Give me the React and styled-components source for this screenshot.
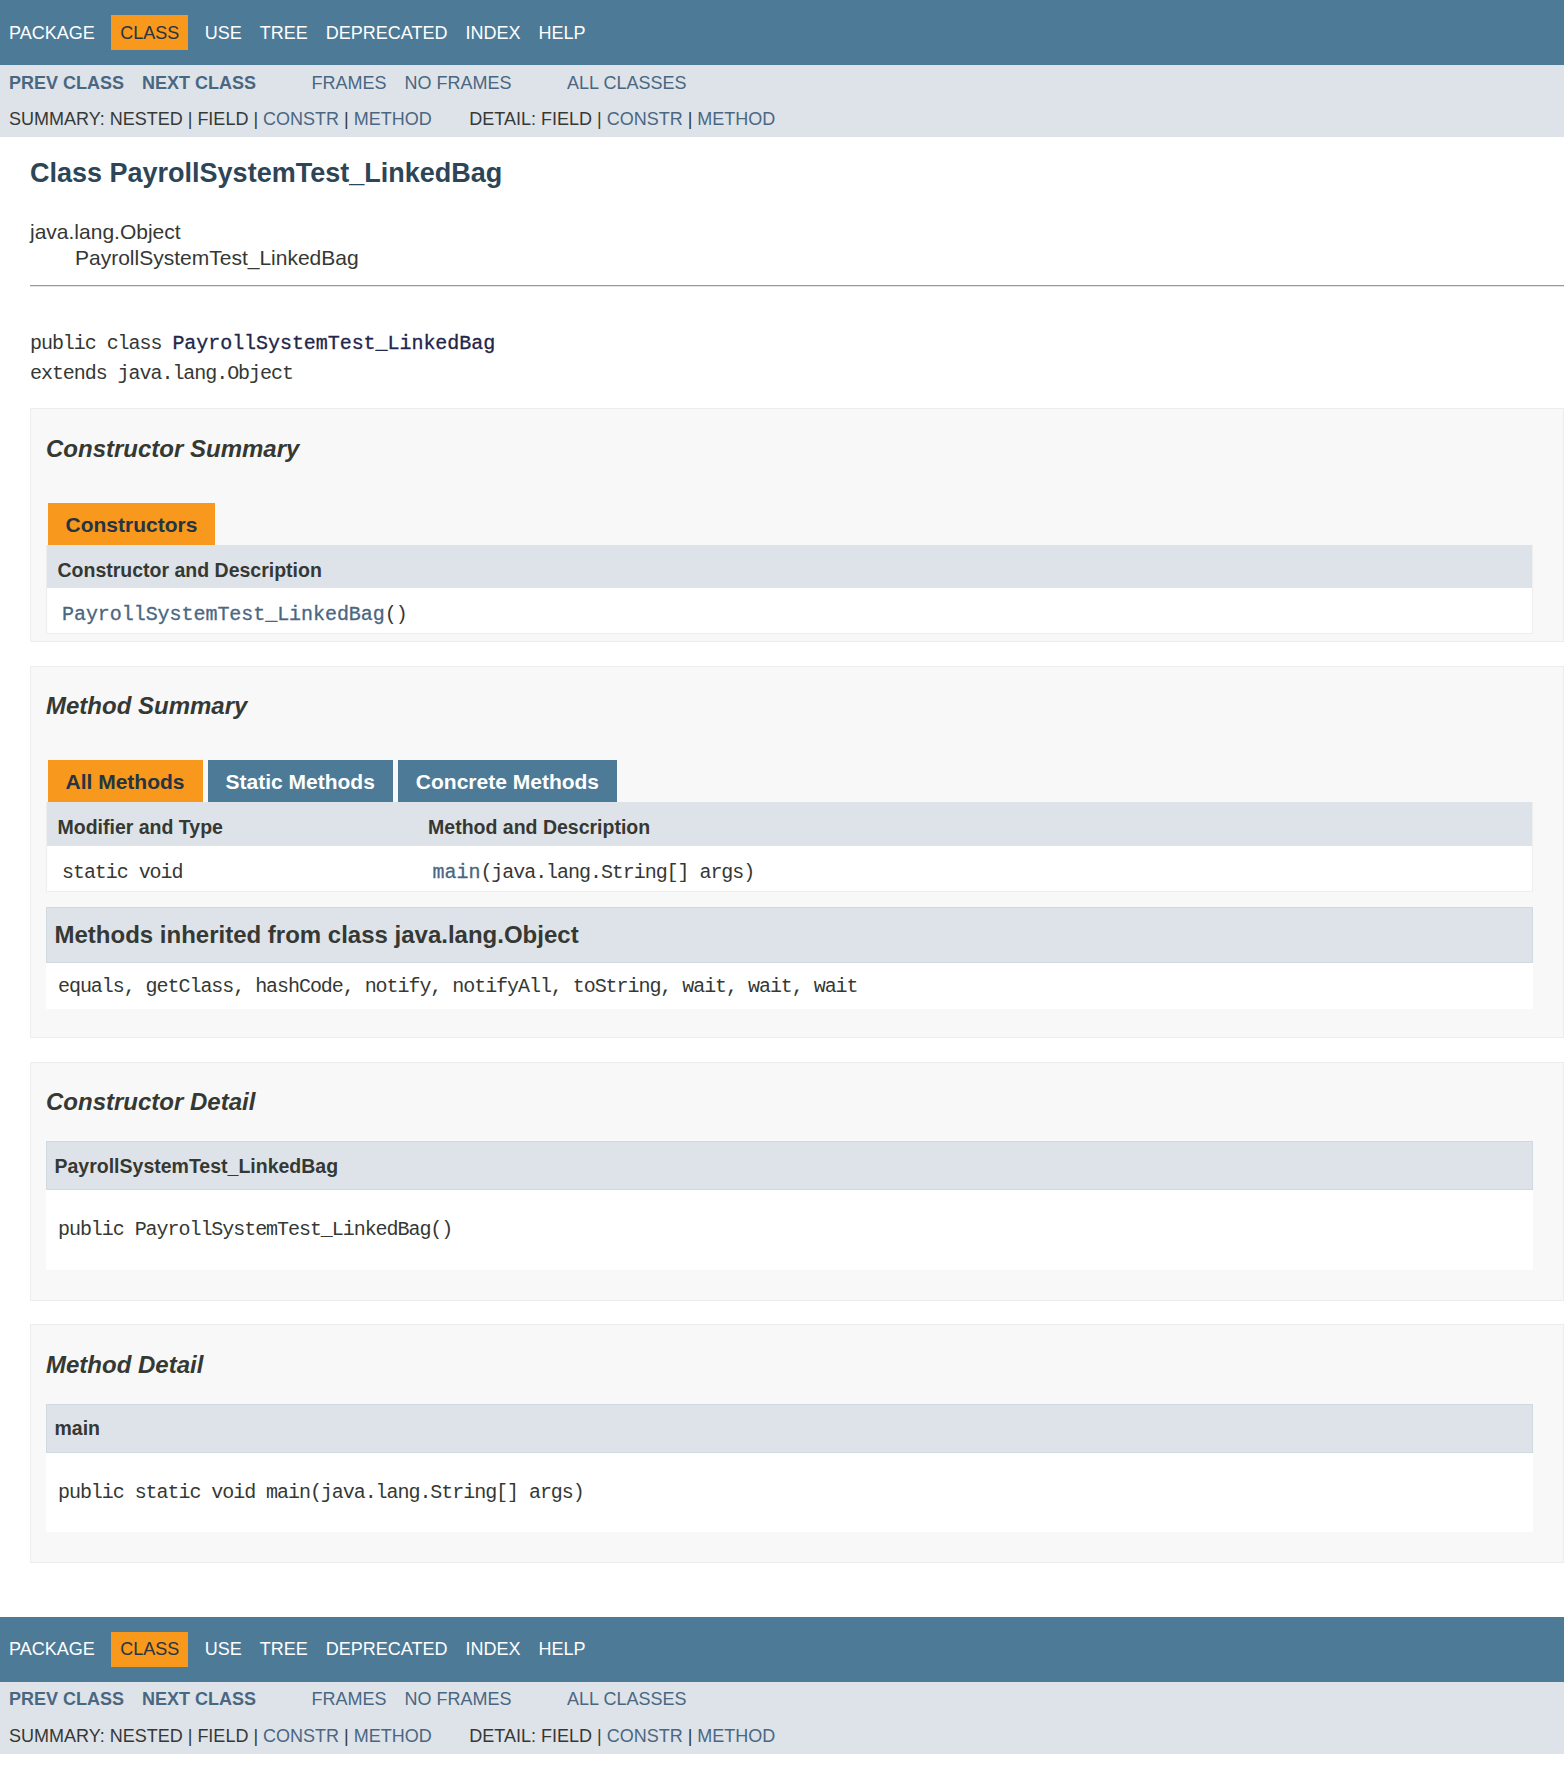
import React from "react";
import styled, { createGlobalStyle } from "styled-components";

const GlobalStyle = createGlobalStyle`
  body {
    margin: 0;
    background: #ffffff;
    color: #353833;
    font-family: "Liberation Sans", Arial, Helvetica, sans-serif;
    font-size: 21px;
  }
`;

const MONO = `"Liberation Mono", "DejaVu Sans Mono", monospace`;

/* ---------- navigation ---------- */

const TopNav = styled.div`
  background-color: #4d7a97;
  height: 50px;
  padding-top: 15px;
  font-size: 18px;
  margin-top: ${(p) => (p.$bottom ? "16px" : "0")};
`;

const NavList = styled.ul`
  display: flex;
  margin: 0;
  padding: 0;
  list-style: none;
`;

const NavItem = styled.li`
  padding: 7.5px 9px;
  line-height: 20px;
  color: ${(p) => (p.$active ? "#253441" : "#ffffff")};
  background-color: ${(p) => (p.$active ? "#f8981d" : "transparent")};
  margin: ${(p) => (p.$active ? "0 7.5px" : "0")};
`;

const SubNav = styled.div`
  background-color: #dee3e9;
  font-size: 18px;
`;

const SubRow = styled.div`
  display: flex;
`;

const SubList = styled.ul`
  display: flex;
  margin: 0 37.5px 0 0;
  padding: 0;
  list-style: none;
`;

const SubItem = styled.li`
  padding: 7.5px 9px;
  line-height: 21px;
  color: #4a6782;
  font-weight: ${(p) => (p.$bold ? "bold" : "normal")};
`;

const JumpRow = styled.div`
  display: flex;
  padding: 8px 0 7px 9px;
  line-height: 21px;
  white-space: pre;
`;

const JumpList = styled.div`
  margin-right: 37.5px;
`;

const Link = styled.span`
  color: #4a6782;
`;

/* bold member names: slightly heavier and wider than the plain code text */
const MemberName = styled.span`
  color: ${(p) => (p.$plain ? "#22264a" : "#4a6782")};
  letter-spacing: -0.05px;
  -webkit-text-stroke: 0.3px currentColor;
`;

/* ---------- header ---------- */

const Header = styled.div`
  margin: 0 30px;
  padding-top: 6px;
`;

const Title = styled.h2`
  color: #2c4557;
  font-size: 27px;
  line-height: 31px;
  margin: 15px 0;
`;

/* ---------- content ---------- */

const Content = styled.div`
  padding: 16px 0 14px 30px;
`;

const Inheritance = styled.div`
  line-height: 24px;
`;

const SubClass = styled.div`
  padding: 1.5px 0 0 45px;
`;

const Rule = styled.hr`
  margin: 15px 0 0;
  height: 0;
  border: 0;
  border-top: 1px solid #9a9a9a;
  border-bottom: 1px solid #e4e4e4;
`;

const Signature = styled.pre`
  font-family: ${MONO};
  font-size: 20px;
  letter-spacing: -1.05px;
  line-height: 30px;
  margin: 42px 0 19.5px;
`;

const Section = styled.section`
  border: 1px solid #ededed;
  background-color: #f8f8f8;
  padding: 0 30px 7.5px 15px;
  margin-bottom: 23.5px;
`;

const SectionTitle = styled.h3`
  font-size: 24px;
  font-style: italic;
  font-weight: bold;
  line-height: 33.6px;
  margin: 22.5px 0;
`;

const TabRow = styled.div`
  display: flex;
  padding: 15px 0 0 1.5px;
`;

const Tab = styled.span`
  height: 24px;
  line-height: 24px;
  padding: 10px 18px 8px;
  margin-right: 5px;
  font-weight: bold;
  white-space: nowrap;
  color: ${(p) => (p.$active ? "#253441" : "#ffffff")};
  background-color: ${(p) => (p.$active ? "#f8981d" : "#4d7a97")};
`;

const Table = styled.div`
  display: grid;
  grid-template-columns: ${(p) => p.$cols};
  border: 1px solid #eeeeee;
  border-top: none;
`;

const HeadCell = styled.div`
  background-color: #dee3e9;
  padding: 12px 3px 4.5px 10.5px;
  font-size: 19.5px;
  font-weight: bold;
  line-height: 27.3px;
`;

const BodyCell = styled.div`
  background-color: #ffffff;
  padding: 12px 0 3px 15px;
`;

const Code = styled.code`
  display: block;
  font-family: ${MONO};
  font-size: 20px;
  letter-spacing: -1.05px;
  line-height: 29.4px;
  white-space: pre;
`;

const WhiteBlock = styled.div`
  background-color: #ffffff;
  padding: 0 0 7.5px 12px;
  margin-top: ${(p) => p.$top || "0"};
  margin-bottom: ${(p) => p.$bottom || "22.5px"};
`;

const BlockHeading = styled.h3`
  background-color: #dee3e9;
  border: 1px solid #d0d9e0;
  margin: 0 0 9px -12px;
  padding: 10.5px 7.5px;
  font-size: 24px;
  font-weight: bold;
  line-height: 33.6px;
`;

const MemberHeading = styled.h4`
  background-color: #dee3e9;
  border: 1px solid #d0d9e0;
  margin: 0 0 9px -12px;
  padding: 10.5px 7.5px;
  font-size: 19.5px;
  font-weight: bold;
  line-height: 26px;
`;

const MemberSignature = styled.pre`
  font-family: ${MONO};
  font-size: 20px;
  letter-spacing: -1.05px;
  line-height: 28px;
  margin: 26px 0 18px;
`;

const NAV_ITEMS = ["PACKAGE", "CLASS", "USE", "TREE", "DEPRECATED", "INDEX", "HELP"];

function NavBar({ bottom }) {
  return (
    <>
      <TopNav $bottom={bottom}>
        <NavList>
          {NAV_ITEMS.map((item) => (
            <NavItem key={item} $active={item === "CLASS"}>
              {item}
            </NavItem>
          ))}
        </NavList>
      </TopNav>
      <SubNav>
        <SubRow>
          <SubList>
            <SubItem $bold>PREV CLASS</SubItem>
            <SubItem $bold>NEXT CLASS</SubItem>
          </SubList>
          <SubList>
            <SubItem>FRAMES</SubItem>
            <SubItem>NO FRAMES</SubItem>
          </SubList>
          <SubList>
            <SubItem>ALL CLASSES</SubItem>
          </SubList>
        </SubRow>
        <JumpRow>
          <JumpList>
            SUMMARY: NESTED | FIELD | <Link>CONSTR</Link> | <Link>METHOD</Link>
          </JumpList>
          <JumpList>
            DETAIL: FIELD | <Link>CONSTR</Link> | <Link>METHOD</Link>
          </JumpList>
        </JumpRow>
      </SubNav>
    </>
  );
}

const INHERITED = "equals, getClass, hashCode, notify, notifyAll, toString, wait, wait, wait";

export default function App() {
  return (
    <>
      <GlobalStyle />
      <NavBar />

      <Header>
        <Title>Class PayrollSystemTest_LinkedBag</Title>
      </Header>

      <Content>
        <Inheritance>
          java.lang.Object
          <SubClass>PayrollSystemTest_LinkedBag</SubClass>
        </Inheritance>
        <Rule />
        <Signature>
          public class <MemberName $plain>PayrollSystemTest_LinkedBag</MemberName>
          {"\n"}extends java.lang.Object
        </Signature>

        <Section>
          <SectionTitle>Constructor Summary</SectionTitle>
          <TabRow>
            <Tab $active>Constructors</Tab>
          </TabRow>
          <Table $cols="1fr">
            <HeadCell>Constructor and Description</HeadCell>
            <BodyCell>
              <Code>
                <MemberName>PayrollSystemTest_LinkedBag</MemberName>()
              </Code>
            </BodyCell>
          </Table>
        </Section>

        <Section>
          <SectionTitle>Method Summary</SectionTitle>
          <TabRow>
            <Tab $active>All Methods</Tab>
            <Tab>Static Methods</Tab>
            <Tab>Concrete Methods</Tab>
          </TabRow>
          <Table $cols="370.6px 1fr">
            <HeadCell>Modifier and Type</HeadCell>
            <HeadCell>Method and Description</HeadCell>
            <BodyCell>
              <Code>static void</Code>
            </BodyCell>
            <BodyCell>
              <Code>
                <MemberName>main</MemberName>(java.lang.String[] args)
              </Code>
            </BodyCell>
          </Table>
          <WhiteBlock $top="15px" $bottom="20.5px">
            <BlockHeading>Methods inherited from class java.lang.Object</BlockHeading>
            <Code>{INHERITED}</Code>
          </WhiteBlock>
        </Section>

        <Section>
          <SectionTitle>Constructor Detail</SectionTitle>
          <WhiteBlock>
            <MemberHeading>PayrollSystemTest_LinkedBag</MemberHeading>
            <MemberSignature>public PayrollSystemTest_LinkedBag()</MemberSignature>
          </WhiteBlock>
        </Section>

        <Section>
          <SectionTitle>Method Detail</SectionTitle>
          <WhiteBlock>
            <MemberHeading>main</MemberHeading>
            <MemberSignature>public static void main(java.lang.String[] args)</MemberSignature>
          </WhiteBlock>
        </Section>
      </Content>

      <NavBar bottom />
    </>
  );
}
